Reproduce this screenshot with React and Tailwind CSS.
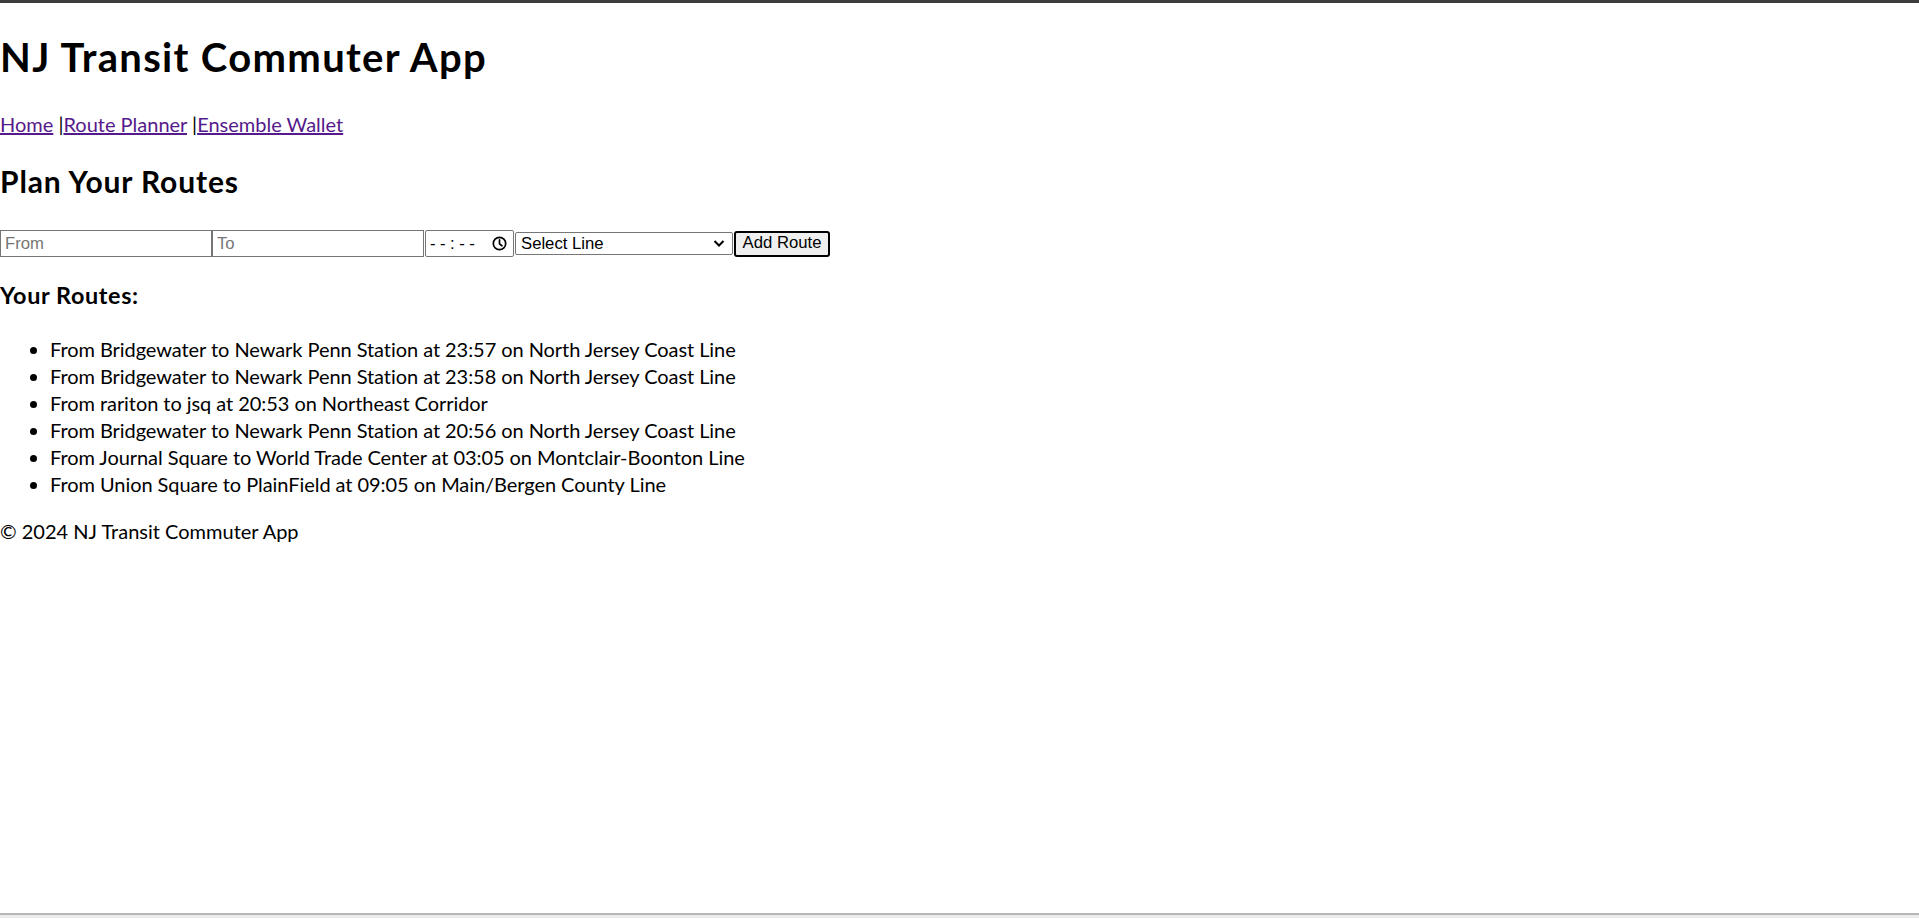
import { useState } from 'react'

const LINES = [
  'Northeast Corridor',
  'North Jersey Coast Line',
  'Raritan Valley Line',
  'Morristown Line',
  'Montclair-Boonton Line',
  'Main/Bergen County Line',
]

const initialRoutes = [
  { from: 'Bridgewater', to: 'Newark Penn Station', time: '23:57', line: 'North Jersey Coast Line' },
  { from: 'Bridgewater', to: 'Newark Penn Station', time: '23:58', line: 'North Jersey Coast Line' },
  { from: 'rariton', to: 'jsq', time: '20:53', line: 'Northeast Corridor' },
  { from: 'Bridgewater', to: 'Newark Penn Station', time: '20:56', line: 'North Jersey Coast Line' },
  { from: 'Journal Square', to: 'World Trade Center', time: '03:05', line: 'Montclair-Boonton Line' },
  { from: 'Union Square', to: 'PlainField', time: '09:05', line: 'Main/Bergen County Line' },
]

function ClockIcon() {
  return (
    <svg width="15" height="15" viewBox="0 0 16 16" fill="none" stroke="black" strokeWidth="1.8">
      <circle cx="8" cy="8" r="6.6" />
      <path d="M8 4.2V8.4L10.6 10.4" strokeLinecap="round" />
    </svg>
  )
}

export default function App() {
  const [routes, setRoutes] = useState(initialRoutes)
  const [form, setForm] = useState({ from: '', to: '', line: '' })

  const handleSubmit = (e) => {
    e.preventDefault()
    if (!form.from || !form.to || !form.line) return
    setRoutes([...routes, { ...form, time: '00:00' }])
    setForm({ from: '', to: '', line: '' })
  }

  return (
    <div className="min-h-screen flex flex-col bg-white text-black [font-family:Lato,sans-serif]">
      <div className="h-[3px] bg-[#3c3c3c]" />

      <div className="flex-1">
        <h1 className="mt-[28px] text-[40px] font-bold leading-[53px] tracking-[0.033em]">NJ Transit Commuter App</h1>

        <nav className="mt-[27px] text-[20px] leading-[27px]">
          <a href="#" className="text-[#551a8b] underline">Home</a> |
          <a href="#" className="text-[#551a8b] underline">Route Planner</a> |
          <a href="#" className="text-[#551a8b] underline">Ensemble Wallet</a>
        </nav>

        <h2 className="mt-[23px] text-[30px] font-bold leading-[40px] tracking-[0.029em]">Plan Your Routes</h2>

        <form onSubmit={handleSubmit} className="mt-[29px] flex items-center h-[27px] [font-family:'Liberation_Sans',Arial,sans-serif] text-[16.7px]">
          <input
            type="text"
            placeholder="From"
            value={form.from}
            onChange={(e) => setForm({ ...form, from: e.target.value })}
            className="w-[212px] h-[27px] border border-[#767676] px-[4px] outline-none placeholder:text-[#757575]"
          />
          <input
            type="text"
            placeholder="To"
            value={form.to}
            onChange={(e) => setForm({ ...form, to: e.target.value })}
            className="w-[212px] h-[27px] border border-[#767676] px-[4px] outline-none placeholder:text-[#757575]"
          />
          <div className="ml-[1px] w-[89px] h-[27px] border border-[#767676] rounded-[2px] pl-[4px] pr-[6px] flex items-center justify-between">
            <span className="tracking-[4.5px]">--:--</span>
            <ClockIcon />
          </div>
          <div className="relative ml-[1px] w-[218px] h-[23px]">
            <select
              value={form.line}
              onChange={(e) => setForm({ ...form, line: e.target.value })}
              className="block appearance-none w-full h-[23px] border border-[#767676] rounded-[2px] pl-[5px] py-0 leading-[17px] bg-white outline-none"
            >
              <option value="">Select Line</option>
              {LINES.map((line) => (
                <option key={line} value={line}>{line}</option>
              ))}
            </select>
            <svg className="absolute right-[8px] top-[7px] pointer-events-none" width="12" height="9" viewBox="0 0 12 9" fill="none" stroke="black" strokeWidth="2">
              <path d="M1.5 2L6 6.5L10.5 2" />
            </svg>
          </div>
          <button
            type="submit"
            className="ml-[1px] w-[96px] h-[26px] border-2 border-black rounded-[3px] bg-[#efefef] leading-none"
          >
            Add Route
          </button>
        </form>

        <h3 className="mt-[23px] text-[23.4px] font-bold leading-[31px] tracking-[0.026em]">Your Routes:</h3>

        <ul className="mt-[25px] list-disc pl-[50px] text-[20px] leading-[27px] tracking-[-0.06px]">
          {routes.map((r, i) => (
            <li key={i}>
              From {r.from} to {r.to} at {r.time} on {r.line}
            </li>
          ))}
        </ul>

        <footer className="mt-[20px] text-[20px] leading-[27px]">
          <p>© 2024 NJ Transit Commuter App</p>
        </footer>
      </div>

      <div className="h-[2px] bg-[#b8b8b8]" />
      <div className="h-[3px] bg-[#ececec]" />
    </div>
  )
}
